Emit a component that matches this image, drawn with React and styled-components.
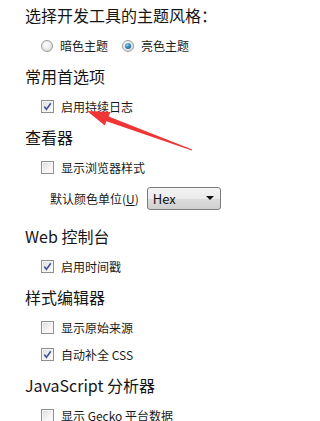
import React from "react";
import styled, { createGlobalStyle } from "styled-components";

const Global = createGlobalStyle`
  html, body { margin: 0; padding: 0; background: #fff; }
  body { font-family: "Noto Sans CJK SC", "Noto Sans", sans-serif; color: #1e1e1e; }
`;

const Page = styled.div`
  position: relative;
  width: 239px;
  height: 421px;
  overflow: hidden;
  background: #fff;
`;

const Section = styled.section`
  display: flex;
  flex-direction: column;
`;

const Heading = styled.div`
  height: 30px;
  line-height: 30px;
  padding-left: 25px;
  font-size: 16px;
  color: #151515;
  white-space: nowrap;
`;

const List = styled.div`
  display: flex;
  flex-direction: column;
  padding: 2px 0;
`;

const Item = styled.label`
  display: flex;
  align-items: center;
  gap: ${(p) => p.$gap || 7}px;
  height: ${(p) => p.$h || 27}px;
  margin-bottom: ${(p) => p.$mb || 0}px;
  padding-left: ${(p) => p.$indent || 41}px;
  font-size: 12px;
  color: #1a1a1a;
  white-space: nowrap;
`;

const RadioGroup = styled.div`
  display: flex;
  align-items: center;
  gap: 14px;
  height: 31px;
  padding-left: 41px;
  font-size: 12px;
  color: #1a1a1a;
`;

const RadioOpt = styled.span`
  display: flex;
  align-items: center;
  gap: 7px;
`;

const RadioCircle = styled.span`
  position: relative;
  box-sizing: border-box;
  width: 12px;
  height: 12px;
  border-radius: 50%;
  border: 1px solid #9a9a9a;
  background: radial-gradient(circle at 40% 35%, #ffffff 0%, #e8e8e8 55%, #cfcfcf 100%);
  flex: none;
  &::after {
    content: "";
    display: ${(p) => (p.$on ? "block" : "none")};
    position: absolute;
    left: 2px;
    top: 2px;
    width: 6px;
    height: 6px;
    border-radius: 50%;
    background: radial-gradient(circle at 40% 35%, #8fd3f5 0%, #2a7fb6 50%, #12385a 100%);
  }
`;

const Box = styled.span`
  box-sizing: border-box;
  width: 13px;
  height: 13px;
  border: 1px solid #8e8f8f;
  background: linear-gradient(135deg, #dcdcdc 0%, #f4f4f4 60%, #ffffff 100%);
  box-shadow: inset 0 0 0 1px #f6f6f6;
  display: flex;
  align-items: center;
  justify-content: center;
  flex: none;
`;

const Label = styled.span``;

const Key = styled.span`
  text-decoration: underline;
`;

const SelectBox = styled.div`
  box-sizing: border-box;
  width: 74px;
  height: 23px;
  border: 1px solid #7a7a7a;
  border-radius: 3px;
  background: linear-gradient(#f3f3f3 0%, #ebebeb 50%, #dddddd 51%, #cfcfcf 100%);
  display: flex;
  align-items: center;
  justify-content: space-between;
  padding: 0 6px 0 5px;
  font-size: 13px;
  color: #111;
`;

const Caret = styled.span`
  width: 0;
  height: 0;
  border-left: 4px solid transparent;
  border-right: 4px solid transparent;
  border-top: 4px solid #111;
`;

const Overlay = styled.svg`
  position: absolute;
  left: 0;
  top: 0;
  width: 239px;
  height: 421px;
  pointer-events: none;
`;

function Check({ on }) {
  return (
    <Box>
      {on && (
        <svg width="9" height="9" viewBox="0 0 9 9">
          <path d="M1.3 4.6 L3.4 7.4 L7.8 1.2" fill="none" stroke="#46559a" strokeWidth="1.7" />
        </svg>
      )}
    </Box>
  );
}

function CheckItem({ on, children }) {
  return (
    <Item>
      <Check on={on} />
      <Label>{children}</Label>
    </Item>
  );
}

export default function App() {
  return (
    <>
      <Global />
      <Page>
        <Section>
          <Heading>选择开发工具的主题风格：</Heading>
          <RadioGroup>
            <RadioOpt>
              <RadioCircle />
              <Label>暗色主题</Label>
            </RadioOpt>
            <RadioOpt>
              <RadioCircle $on />
              <Label>亮色主题</Label>
            </RadioOpt>
          </RadioGroup>
        </Section>
        <Section>
          <Heading>常用首选项</Heading>
          <List>
            <CheckItem on>启用持续日志</CheckItem>
          </List>
        </Section>
        <Section>
          <Heading>查看器</Heading>
          <List>
            <CheckItem>显示浏览器样式</CheckItem>
            <Item $h={34} $mb={4} $indent={50} $gap={8} as="div">
              <Label>
                默认颜色单位(<Key>U</Key>)
              </Label>
              <SelectBox>
                <span>Hex</span>
                <Caret />
              </SelectBox>
            </Item>
          </List>
        </Section>
        <Section>
          <Heading>Web 控制台</Heading>
          <List>
            <CheckItem on>启用时间戳</CheckItem>
          </List>
        </Section>
        <Section>
          <Heading>样式编辑器</Heading>
          <List>
            <CheckItem>显示原始来源</CheckItem>
            <CheckItem on>自动补全 CSS</CheckItem>
          </List>
        </Section>
        <Section>
          <Heading>JavaScript 分析器</Heading>
          <List>
            <CheckItem>显示 Gecko 平台数据</CheckItem>
          </List>
        </Section>
        <Overlay viewBox="0 0 239 421">
          <polygon
            points="87,111 110.5,112 108.6,116.5 192.2,149.6 191.8,150.6 106.4,121.2 104.8,125.6"
            fill="#ef3535"
          />
        </Overlay>
      </Page>
    </>
  );
}
